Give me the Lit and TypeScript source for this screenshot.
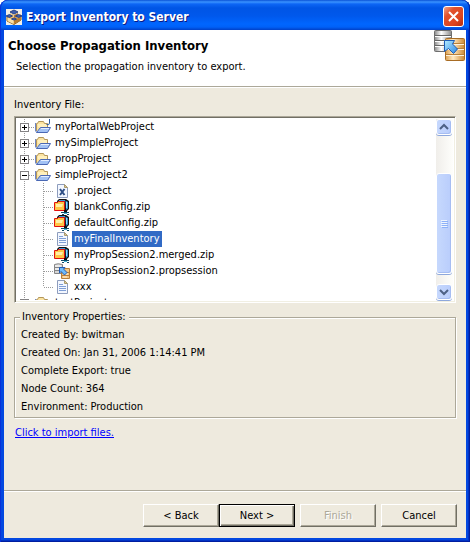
import { LitElement, html, svg, css, nothing } from "lit";
import { customElement, property, state } from "lit/decorators.js";
import { classMap } from "lit/directives/class-map.js";

type IconName = "web" | "folder" | "xml" | "zip" | "text" | "session";

interface Node {
  label: string;
  icon: IconName;
  open?: boolean;
  children?: Node[];
}

const tree: Node[] = [
  { label: "myPortalWebProject", icon: "web" },
  { label: "mySimpleProject", icon: "folder" },
  { label: "propProject", icon: "folder" },
  {
    label: "simpleProject2",
    icon: "folder",
    open: true,
    children: [
      { label: ".project", icon: "xml" },
      { label: "blankConfig.zip", icon: "zip" },
      { label: "defaultConfig.zip", icon: "zip" },
      { label: "myFinalInventory", icon: "text" },
      { label: "myPropSession2.merged.zip", icon: "zip" },
      { label: "myPropSession2.propsession", icon: "session" },
      { label: "xxx", icon: "text" },
    ],
  },
  { label: "testProject", icon: "folder" },
];

const inventory = [
  ["Created By", "bwitman"],
  ["Created On", "Jan 31, 2006 1:14:41 PM"],
  ["Complete Export", "true"],
  ["Node Count", "364"],
  ["Environment", "Production"],
];

const folder = svg`
  <path d="M1.500 12V4.500H2.500L3.500 2.500H8.500L9.500 4.500H12.500V8" fill="#fbe3a0" stroke="#b3965a"/>
  <path d="M3 5H12V8H3Z" fill="#fff0bd"/>
  <path d="M.5 4V12L2 13.500" fill="none" stroke="#6f86c4"/>
  <path d="M1.500 13.500L5.500 8.500H15.500L12.500 13.500Z" fill="#a3c2f4" stroke="#4a68b4"/>
  <path d="M6 9.500H14" stroke="#e3eeff"/>`;

const page = svg`
  <path d="M3.500 1.500H10.500L13.500 4.500V14.500H3.500Z" fill="#f3f7ff" stroke="#8d9cbd"/>
  <path d="M10.500 1.500V4.500H13.500Z" fill="#e4c98a" stroke="#a79a72"/>`;

const icons = {
  folder,
  web: svg`${folder}<path d="M14.500 0V4Q14.500 6.500 11.500 5.500" fill="none" stroke="#2b5a9b"/>`,
  xml: svg`${page}<path d="M6 6L10.500 12M10.500 6L6 12" stroke="#2f4f86" stroke-width="2"/>`,
  text: svg`${page}<path d="M5 5.500H9M5 7.500H12M5 9.500H12M5 11.500H12" stroke="#7f9fd6"/>`,
  zip: svg`
    <path d="M3 2L5 0H12L15 2V10L13 12H4Z" fill="#111"/>
    <path d="M11.500 1.500L14 3V9.500L12 11Z" fill="#2f8fd0"/>
    <path d="M12.500 3V9" stroke="#8fd6f5"/>
    <path d="M5 1.500H11" stroke="#3c9ad6"/>
    <path d="M.5 3.500H3.500L4.500 2.500H10.500V11.500H.5Z" fill="#ffc545" stroke="#e01010"/>
    <path d="M2 5H9L8 8H2Z" fill="#fff0a8"/>
    <path d="M11.500 11V13" stroke="#111" stroke-width="3"/>
    <path d="M7 13.500H15M8 15.500H10M13 15.500H15" stroke="#0d4a66"/>
    <path d="M10 14.500H13" stroke="#3fb4d8"/>`,
  session: svg`
    <path d="M.5 1.500Q4 0 8.500 1.500V10.500H.5Z" fill="#d6d6d6" stroke="#858585"/>
    <path d="M1 4.500H8M1 7.500H8" stroke="#858585"/>
    <path d="M1 3H7M1 6H7" stroke="#fff"/>
    <path d="M7.500 5.500H15.500V15.500H7.500Z" fill="#f3c684" stroke="#b97f38"/>
    <path d="M8 9.500H15M8 12.500H15" stroke="#b97f38"/>
    <path d="M9 11H14M9 14H13" stroke="#fff0d4"/>
    <path d="M5.500 4.500H11L9.500 6L13 9.500L10.500 12L7 8.500L5.500 10Z" fill="#6fbcfa" stroke="#1f5cb8"/>`,
};

const appLogo = svg`
  <path d="M0 0H16V16H0Z" fill="#f4efe6"/>
  <path d="M1 8L6 5.500L10 8L15 6V11L8 15.500L1 12Z" fill="#e9b665" stroke="#8a6022"/>
  <path d="M1.500 8.500L7.500 11V15L1.500 12Z" fill="#fbe0a6"/>
  <path d="M8 11L14.500 8V11.500L8 15Z" fill="#b87c2e"/>
  <path d="M4 4L8 6V9L4 7Z" fill="#f3cf8b"/>
  <path d="M8 6L12 4V7L8 9Z" fill="#b47a30"/>
  <path d="M4 3L8 1L12 3L8 5Z" fill="#3d5fae" stroke="#2b4285"/>
  <path d="M0 7L3.500 5.500L6.500 7L3.500 8.500Z" fill="#3d5fae" stroke="#2b4285"/>
  <path d="M9.500 7L12.500 5.500L16 7L12.500 8.500Z" fill="#3d5fae" stroke="#2b4285"/>
  <path d="M5.500 10L8 9L10.500 10L8 11Z" fill="#4f74c6" stroke="#2b4285"/>`;

const banner = svg`
  <defs>
    <linearGradient id="silver"><stop offset="0" stop-color="#8a8a8a"/><stop offset=".4" stop-color="#fff"/><stop offset="1" stop-color="#8a8a8a"/></linearGradient>
    <linearGradient id="bronze"><stop offset="0" stop-color="#dca050"/><stop offset=".4" stop-color="#ffe9c2"/><stop offset="1" stop-color="#cf8a33"/></linearGradient>
    <linearGradient id="sky" x2="1" y2="1"><stop offset="0" stop-color="#b5ecff"/><stop offset="1" stop-color="#2c88e6"/></linearGradient>
  </defs>
  <rect x=".5" y=".5" width="17" height="21" rx="1" fill="url(#silver)" stroke="#6e6e6e"/>
  <path d="M1 5.500H17M1 10.500H17M1 15.500H17" stroke="#666"/>
  <path d="M1 6.500H17M1 11.500H17M1 16.500H17" stroke="#fff"/>
  <rect x="11.500" y="8.500" width="19" height="22" rx="1" fill="url(#bronze)" stroke="#a86c24"/>
  <path d="M12 13.500H30M12 18.500H30M12 24.500H30" stroke="#b98039"/>
  <path d="M12 14.500H30M12 19.500H30M12 25.500H30" stroke="#fff3dc"/>
  <path d="M10.500 10.500H20.500L18.500 14L23.500 19L19.500 23.500L14.500 18.500L10.500 21.500Z" fill="url(#sky)" stroke="#1c5cb8"/>`;

@customElement("tree-row")
export class TreeRow extends LitElement {
  @property({ attribute: false }) node!: Node;
  @property({ type: Number }) level = 0;
  @property({ type: Boolean }) last = false;
  @property({ type: Boolean }) selected = false;

  static styles = css`
    :host { display: block; }
    .row { display: flex; height: 16px; line-height: 16px; white-space: nowrap; cursor: default; }
    svg { flex: none; display: block; }
    .label { margin-left: 2px; padding: 0 2px; }
    .selected { background: #316ac5; color: #fff; }
  `;

  private guides() {
    const dots = (d: string) => svg`<path d=${d} stroke="#9a9a9a" stroke-dasharray="1 1"/>`;
    if (this.level) {
      return html`<svg width="38" height="16" aria-hidden="true">
        ${dots("M8.500 0V16")}${dots(this.last ? "M27.500 0V8" : "M27.500 0V16")}${dots("M28 8.500H37")}
      </svg>`;
    }
    return html`<svg width="19" height="16" aria-hidden="true">
      ${dots("M8.500 0V16")}${dots("M13 8.500H19")}
      <rect x="4.500" y="4.500" width="8" height="8" fill="#fff" stroke="#848284"/>
      <path d=${this.node.open ? "M6 8.500H11" : "M6 8.500H11M8.500 6V11"} stroke="#000"/>
    </svg>`;
  }

  render() {
    return html`<div class="row">
      ${this.guides()}
      <svg width="16" height="16" aria-hidden="true">${icons[this.node.icon]}</svg>
      <span class=${classMap({ label: true, selected: this.selected })}>${this.node.label}</span>
    </div>`;
  }
}

@customElement("app-root")
export class AppRoot extends LitElement {
  @state() private selected = "myFinalInventory";

  static styles = css`
    :host {
      display: block;
      background: #fff;
      color: #000;
      font: 11px/14px "DejaVu Sans Condensed", "Noto Sans", sans-serif;
    }
    * { box-sizing: border-box; }
    svg { display: block; flex: none; }
    .window {
      display: flex;
      flex-direction: column;
      min-height: 100vh;
      padding: 0 4px 4px;
      border-radius: 8px 8px 0 0;
      background: #0348e0;
      box-shadow: inset 1px 0 #0831d9, inset -1px -1px #001ea0, inset -2px -2px #0133c4;
    }
    .titlebar {
      display: flex;
      align-items: center;
      gap: 4px;
      height: 30px;
      margin: 0 -4px;
      padding: 3px 6px 0;
      border-radius: 8px 8px 0 0;
      background: linear-gradient(#0a52d6 0, #3a93ff 2px, #0d66f5 4px, #0055e5 8px, #0058ec 16px, #0066ff 24px, #0061f8 27px, #0040c8 30px);
      box-shadow: inset 1px 0 #0831d9, inset -1px 0 #001ea0;
    }
    .caption {
      flex: 1;
      margin: 0;
      color: #fff;
      font: bold 12px/18px "DejaVu Sans Condensed", "Noto Sans", sans-serif;
      text-shadow: 1px 1px #0a1883;
    }
    .close {
      width: 21px;
      height: 21px;
      padding: 0;
      border: 1px solid #fff;
      border-radius: 3px;
      background: linear-gradient(135deg, #f0a48c, #e2512c 30%, #dc4420 70%, #b52c0c);
    }
    .header {
      display: flex;
      justify-content: space-between;
      height: 56px;
      padding-left: 4px;
      background: #fff;
    }
    .heading { margin: 8px 0 6px; font-size: 13px; line-height: 16px; font-weight: bold; }
    .hint { margin: 0 0 0 8px; }
    .banner { margin-right: 1px; }
    .rule { height: 2px; margin: 0; border: 0; border-top: 1px solid #aca899; border-bottom: 1px solid #fff; background: none; }
    .client { display: flex; flex-direction: column; flex: 1; background: #eeeade; }
    .content { flex: 1; padding: 10px 10px 0; }
    .tree-label { display: block; margin-bottom: 4px; }
    .tree {
      display: flex;
      height: 187px;
      border: 1px solid;
      border-color: #aca899 #fff #fff #aca899;
      box-shadow: inset 1px 1px #716f64, inset -1px -1px #f1efe2;
      padding: 2px 2px 2px 1px;
      background: #fff;
    }
    .rows { flex: 1; margin: 0; padding: 0; list-style: none; overflow: hidden; }
    .scroll {
      display: flex;
      flex-direction: column;
      width: 17px;
      background: linear-gradient(90deg, #f0eeea, #fefefb);
    }
    .step, .thumb {
      display: grid;
      place-items: center;
      width: 16px;
      padding: 0;
      border: 1px solid #fff;
      border-radius: 3px;
      background: linear-gradient(90deg, #c6d8fd, #b9cdfc);
      box-shadow: inset -1px -1px #a6bdf2, 0 1px #8ea8dc;
    }
    .step { height: 16px; }
    .gap { flex: 39; }
    .thumb { flex: 103; }
    .rest { flex: 10; }
    .props {
      margin: 7px 0 0;
      padding: 0 6px 1px;
      border: 1px solid #aca899;
      box-shadow: 1px 1px #fff, inset 1px 1px #fff;
      min-width: 0;
    }
    .legend { margin-left: -1px; padding: 0 3px 0 2px; background: #eeeade; }
    .facts { margin: 2px 0 0; }
    .fact { display: flex; gap: 3px; height: 18px; line-height: 18px; }
    .term, .value { margin: 0; }
    .link { display: inline-block; margin: 8px 1px 0; color: #00f; }
    .buttons { display: flex; justify-content: flex-end; padding: 12px 9px 11px; }
    .btn {
      width: 76px;
      height: 23px;
      padding: 0;
      border: 1px solid;
      border-color: #fff #716f64 #716f64 #fff;
      box-shadow: inset -1px -1px #aca899;
      background: #eeeade;
      color: #000;
      font: inherit;
    }
    .primary { border-color: #000; box-shadow: inset 1px 1px #fff, inset -1px -1px #716f64, inset -2px -2px #aca899; }
    .btn:disabled { color: #aca899; text-shadow: 1px 1px #fff; }
    .spaced { margin-left: 5px; }
  `;

  private row(node: Node, level: number, last = false) {
    return html`
      <li role="treeitem" aria-expanded=${node.open ?? nothing} aria-selected=${this.selected === node.label}>
        <tree-row .node=${node} .level=${level} .last=${last} .selected=${this.selected === node.label}
          @click=${() => (this.selected = node.label)}></tree-row>
      </li>
      ${node.children?.map((child, i, all) => this.row(child, level + 1, i === all.length - 1))}`;
  }

  render() {
    return html`
      <div class="window">
        <header class="titlebar">
          <svg width="16" height="16" aria-hidden="true">${appLogo}</svg>
          <h1 class="caption">Export Inventory to Server</h1>
          <button class="close" type="button" aria-label="Close">
            <svg width="19" height="19" aria-hidden="true"><path d="M5 5L14 14M14 5L5 14" stroke="#fff" stroke-width="2"/></svg>
          </button>
        </header>
        <main class="client">
          <section class="header">
            <div>
              <h2 class="heading">Choose Propagation Inventory</h2>
              <p class="hint">Selection the propagation inventory to export.</p>
            </div>
            <svg class="banner" width="31" height="31" aria-hidden="true">${banner}</svg>
          </section>
          <hr class="rule" />
          <section class="content">
            <span class="tree-label" id="files">Inventory File:</span>
            <div class="tree">
              <ul class="rows" role="tree" aria-labelledby="files">
                ${tree.map((node) => this.row(node, 0))}
              </ul>
              <div class="scroll">
                <button class="step" type="button" aria-label="Scroll up">
                  <svg width="10" height="8" aria-hidden="true"><path d="M1 6L5 2L9 6" fill="none" stroke="#4d6185" stroke-width="2"/></svg>
                </button>
                <div class="gap"></div>
                <div class="thumb">
                  <svg width="7" height="8" aria-hidden="true"><path d="M0 .5H6M0 2.500H6M0 4.500H6M0 6.500H6" stroke="#eef4fe"/><path d="M1 1.500H7M1 3.500H7M1 5.500H7M1 7.500H7" stroke="#8cb0f8"/></svg>
                </div>
                <div class="rest"></div>
                <button class="step" type="button" aria-label="Scroll down">
                  <svg width="10" height="8" aria-hidden="true"><path d="M1 2L5 6L9 2" fill="none" stroke="#4d6185" stroke-width="2"/></svg>
                </button>
              </div>
            </div>
            <fieldset class="props">
              <legend class="legend">Inventory Properties:</legend>
              <dl class="facts">
                ${inventory.map(([term, value]) => html`<div class="fact"><dt class="term">${term}:</dt><dd class="value">${value}</dd></div>`)}
              </dl>
            </fieldset>
            <a class="link" href="#import">Click to import files.</a>
          </section>
          <hr class="rule" />
          <footer class="buttons">
            <button class="btn" type="button">&lt; Back</button>
            <button class="btn primary" type="button">Next &gt;</button>
            <button class="btn spaced" type="button" disabled>Finish</button>
            <button class="btn spaced" type="button">Cancel</button>
          </footer>
        </main>
      </div>
    `;
  }
}
